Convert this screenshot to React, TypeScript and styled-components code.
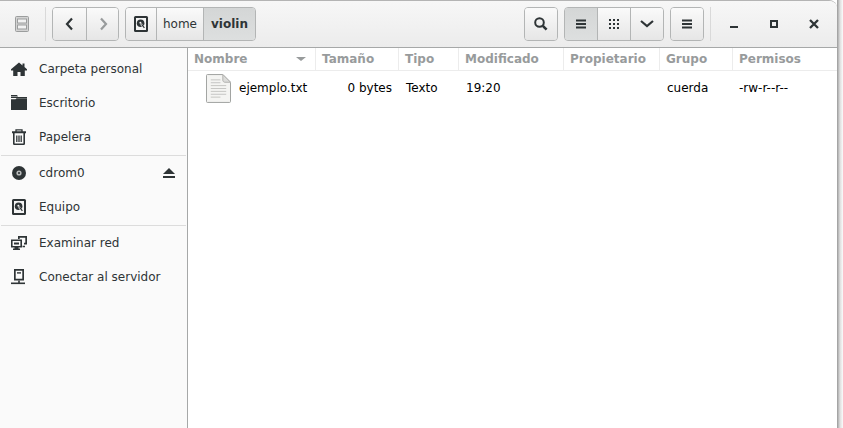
import React from 'react'
import styled, { createGlobalStyle } from 'styled-components'

const GlobalStyle = createGlobalStyle`
  html, body {
    margin: 0;
    padding: 0;
    background: #fff;
    overflow: hidden;
  }
  body {
    font-family: "DejaVu Sans", sans-serif;
    font-size: 12px;
  }
`

const Screen = styled.div`
  display: flex;
  width: 843px;
  height: 428px;
  background: #fff;
`

const Win = styled.div`
  flex: 1;
  min-width: 0;
  display: flex;
  flex-direction: column;
  border-top: 1px solid #b4b4b4;
  border-top-right-radius: 8px;
  overflow: hidden;
  background: #fff;
`

const EdgeShadow = styled.div`
  width: 6px;
  background: linear-gradient(to right, #999, #dedede 50%, #fbfbfb);
`

const Toolbar = styled.div`
  height: 47px;
  flex: none;
  box-sizing: border-box;
  display: flex;
  align-items: center;
  padding: 0 3px 0 15px;
  background: linear-gradient(to bottom, #f7f7f7, #ececec);
  border-bottom: 1px solid #a6a8a8;
`

const AppIcon = styled.div`
  width: 14px;
  height: 16px;
  display: flex;
  margin-right: 16px;
`

const VSep = styled.div<{ $gap: number }>`
  width: 1px;
  height: 34px;
  background: #d9d9d9;
  margin-right: ${({ $gap }) => $gap}px;
`

const BtnGroup = styled.div<{ $gap?: number }>`
  display: flex;
  height: 34px;
  box-sizing: border-box;
  border: 1px solid #b3b5b5;
  border-radius: 4px;
  overflow: hidden;
  margin-right: ${({ $gap }) => $gap ?? 6}px;
`

const Btn = styled.div<{ $w: number; $on?: boolean }>`
  width: ${({ $w }) => $w}px;
  display: flex;
  align-items: center;
  justify-content: center;
  box-sizing: border-box;
  color: #2e3436;
  background: ${({ $on }) => ($on ? 'linear-gradient(to bottom, #d4d6d6, #dddfdf)' : 'linear-gradient(to bottom, #fafafa, #e6e6e6)')};
  font-size: 12px;
  font-weight: ${({ $on }) => ($on ? 700 : 400)};
  & + & {
    border-left: 1px solid #b3b5b5;
  }
`

const Spacer = styled.div`
  flex: 1;
`

const WinControls = styled.div`
  display: flex;
  align-items: center;
  margin-left: 3px;
`

const WinBtn = styled.div`
  width: 40px;
  display: flex;
  justify-content: center;
  color: #2e3436;
`

const Body = styled.div`
  flex: 1;
  min-height: 0;
  display: flex;
`

const Sidebar = styled.div`
  width: 188px;
  flex: none;
  box-sizing: border-box;
  background: #fafafa;
  border-right: 1px solid #a6a8a8;
  padding-top: 4px;
`

const SideRow = styled.div`
  height: 34px;
  display: flex;
  align-items: center;
  padding: 0 11px;
  color: #2e3436;
  font-size: 12px;
`

const SideIcon = styled.div`
  width: 16px;
  height: 16px;
  display: flex;
  margin-right: 12px;
  color: #2e3436;
`

const SideLabel = styled.span`
  flex: 1;
`

const SideSep = styled.div`
  height: 1px;
  background: #dcdcdc;
  margin: 1px 1px 0;
`

const Content = styled.div`
  flex: 1;
  min-width: 0;
`

const COLS = '127px 83px 60px 105px 96px 73px 1fr'

const HeaderRow = styled.div`
  display: grid;
  grid-template-columns: ${COLS};
  height: 23px;
  box-sizing: border-box;
  border-bottom: 1px solid #ececec;
`

const HeadCell = styled.div`
  display: flex;
  align-items: center;
  justify-content: space-between;
  padding: 0 9px 0 6px;
  font-size: 12px;
  font-weight: 700;
  color: #989b9c;
  & + & {
    border-left: 1px solid #ececec;
  }
`

const FileRow = styled.div`
  display: grid;
  grid-template-columns: ${COLS};
  height: 34px;
  align-items: center;
  color: #2e3436;
  font-size: 12px;
`

const NameCell = styled.div`
  display: flex;
  align-items: center;
  padding-left: 18px;
  color: #000;
  gap: 8px;
`

const FileGlyph = styled.svg`
  flex: none;
`

const Cell = styled.div<{ $right?: boolean }>`
  padding: ${({ $right }) => ($right ? '0 6px 0 0' : '0 0 0 8px')};
  text-align: ${({ $right }) => ($right ? 'right' : 'left')};
  color: #000;
  &:last-child {
    padding-left: 7px;
  }
`

const DiskIcon = () => (
  <svg width="16" height="16" viewBox="0 0 16 16">
    <rect x="1" y="0" width="14" height="16" rx="1.5" fill="#2e3436" />
    <rect x="3" y="2" width="10" height="12" fill="#f4f4f4" />
    <circle cx="7.6" cy="7.2" r="3.8" fill="#2e3436" />
    <circle cx="7.4" cy="6.8" r="1" fill="#f4f4f4" />
    <path d="M8 8l3.6 4.4" stroke="#f4f4f4" strokeWidth="2" />
    <path d="M8.6 8.4l2.8 3.4" stroke="#2e3436" strokeWidth="1.2" />
  </svg>
)

const Lines = () => (
  <svg width="12" height="12" viewBox="0 0 12 12" fill="#2e3436">
    <rect x="1" y="1.5" width="10" height="2" />
    <rect x="1" y="5" width="10" height="2" />
    <rect x="1" y="8.5" width="10" height="2" />
  </svg>
)

const Chevron = ({ dir, color = '#2e3436' }: { dir: 'left' | 'right' | 'down'; color?: string }) => {
  const d = dir === 'left' ? 'M10 2.5L5 8l5 5.5' : dir === 'right' ? 'M6 2.5L11 8l-5 5.5' : 'M2 5l6 5 6-5'
  return (
    <svg width="16" height="16" viewBox="0 0 16 16" fill="none">
      <path d={d} stroke={color} strokeWidth="2.2" />
    </svg>
  )
}

const sections = [
  [
    {
      label: 'Carpeta personal',
      icon: (
        <svg width="16" height="16" viewBox="0 0 16 16" fill="#2e3436">
          <path d="M8 1.5L0 8.2v1.4h2.2V15h4.3v-4h3v4h4.3V9.6H16V8.2l-2.5-2.1V2.5h-2v1.9z" />
        </svg>
      ),
    },
    {
      label: 'Escritorio',
      icon: (
        <svg width="16" height="16" viewBox="0 0 16 16" fill="#2e3436">
          <path d="M0 0h6l1 1.5H0z" />
          <path d="M0 2h16v.9H0z" />
          <path d="M0 4.2h4.5l1-1H16V15H0z" />
        </svg>
      ),
    },
    {
      label: 'Papelera',
      icon: (
        <svg width="16" height="16" viewBox="0 0 16 16" fill="none" stroke="#2e3436">
          <path d="M1 3.3h14" strokeWidth="2" />
          <path d="M5 3V.8h6V3" strokeWidth="1.3" />
          <path d="M2.8 4v10.6c0 .5.3.8.8.8h8.8c.5 0 .8-.3.8-.8V4" strokeWidth="1.6" />
          <path d="M5.8 6.5V13M8 6.5V13M10.2 6.5V13" strokeWidth="1.3" />
        </svg>
      ),
    },
  ],
  [
    {
      label: 'cdrom0',
      icon: (
        <svg width="16" height="16" viewBox="0 0 16 16">
          <circle cx="8" cy="8" r="7" fill="#2e3436" />
          <circle cx="8" cy="8" r="2.6" fill="#b9bbbb" />
          <circle cx="8" cy="8" r="1.1" fill="#2e3436" />
        </svg>
      ),
      eject: true,
    },
    { label: 'Equipo', icon: <DiskIcon /> },
  ],
  [
    {
      label: 'Examinar red',
      icon: (
        <svg width="16" height="16" viewBox="0 0 16 16" fill="#2e3436">
          <path d="M7 1h9v8.5h-3V7.8h1.3V2.7H8.7V4H7z" />
          <path fillRule="evenodd" d="M0 4.5h11v8H7.5v1H9V15H2v-1.5h1.5v-1H0zM1.6 6v5h7.8V6z" />
          <rect x="3" y="7.5" width="5" height="2" />
          <path d="M11.5 10.8H14v1.5h-2.5z" />
        </svg>
      ),
    },
    {
      label: 'Conectar al servidor',
      icon: (
        <svg width="16" height="16" viewBox="0 0 16 16" fill="#2e3436">
          <path fillRule="evenodd" d="M3 0h10v11.5H3zM4.7 1.7v8.1h6.6V1.7z" />
          <rect x="6" y="3.2" width="4" height="1.4" />
          <rect x="7.2" y="11.5" width="1.6" height="2.5" />
          <rect x="0" y="13.5" width="14" height="1.6" />
        </svg>
      ),
    },
  ],
]

const columns = ['Nombre', 'Tamaño', 'Tipo', 'Modificado', 'Propietario', 'Grupo', 'Permisos']

export default function App() {
  return (
    <>
      <GlobalStyle />
      <Screen>
        <Win>
          <Toolbar>
            <AppIcon>
              <svg width="14" height="16" viewBox="0 0 14 16" fill="none">
                <rect x=".5" y=".5" width="13" height="15" rx="1" fill="#d3d3d3" stroke="#9b9d9d" />
                <rect x="2.5" y="3" width="9" height="4" fill="#f2f2f2" stroke="#9b9d9d" />
                <rect x="2.5" y="9" width="9" height="4" fill="#f2f2f2" stroke="#9b9d9d" />
              </svg>
            </AppIcon>
            <VSep $gap={6} />
            <BtnGroup>
              <Btn $w={33}><Chevron dir="left" /></Btn>
              <Btn $w={32}><Chevron dir="right" color="#989b9c" /></Btn>
            </BtnGroup>
            <BtnGroup $gap={0}>
              <Btn $w={30}><DiskIcon /></Btn>
              <Btn $w={47}>home</Btn>
              <Btn $w={52} $on>violin</Btn>
            </BtnGroup>
            <Spacer />
            <BtnGroup>
              <Btn $w={32}>
                <svg width="16" height="16" viewBox="0 0 16 16" fill="none" stroke="#2e3436">
                  <circle cx="6.5" cy="6.5" r="4.3" strokeWidth="2" />
                  <path d="M9.8 9.8l3.8 3.8" strokeWidth="2.6" />
                </svg>
              </Btn>
            </BtnGroup>
            <BtnGroup>
              <Btn $w={32} $on><Lines /></Btn>
              <Btn $w={33}>
                <svg width="12" height="12" viewBox="0 0 12 12" fill="#2e3436">
                  {[1, 5, 9].flatMap(y => [1, 5, 9].map(x => <rect key={`${x}-${y}`} x={x} y={y} width="2" height="2" />))}
                </svg>
              </Btn>
              <Btn $w={33}><Chevron dir="down" /></Btn>
            </BtnGroup>
            <BtnGroup>
              <Btn $w={32}><Lines /></Btn>
            </BtnGroup>
            <VSep $gap={0} />
            <WinControls>
              <WinBtn>
                <svg width="16" height="16" viewBox="0 0 16 16" fill="#2e3436">
                  <rect x="4" y="10" width="8" height="2" />
                </svg>
              </WinBtn>
              <WinBtn>
                <svg width="16" height="16" viewBox="0 0 16 16" fill="none" stroke="#2e3436" strokeWidth="2">
                  <rect x="5" y="5" width="6" height="6" />
                </svg>
              </WinBtn>
              <WinBtn>
                <svg width="16" height="16" viewBox="0 0 16 16" fill="none" stroke="#2e3436" strokeWidth="2.3">
                  <path d="M4 4l8 8M12 4l-8 8" />
                </svg>
              </WinBtn>
            </WinControls>
          </Toolbar>
          <Body>
            <Sidebar>
              {sections.map((items, i) => (
                <React.Fragment key={i}>
                  {i > 0 && <SideSep />}
                  {items.map(item => (
                    <SideRow key={item.label}>
                      <SideIcon>{item.icon}</SideIcon>
                      <SideLabel>{item.label}</SideLabel>
                      {'eject' in item && (
                        <svg width="14" height="12" viewBox="0 0 14 12" fill="#2e3436">
                          <path d="M7 1l6 6H1z" />
                          <rect x="1" y="9" width="12" height="2" />
                        </svg>
                      )}
                    </SideRow>
                  ))}
                </React.Fragment>
              ))}
            </Sidebar>
            <Content>
              <HeaderRow>
                {columns.map((c, i) => (
                  <HeadCell key={c}>
                    {c}
                    {i === 0 && (
                      <svg width="10" height="4" viewBox="0 0 10 4" fill="#989b9c">
                        <path d="M0 0h10L5 4z" />
                      </svg>
                    )}
                  </HeadCell>
                ))}
              </HeaderRow>
              <FileRow>
                <NameCell>
                  <FileGlyph width="25" height="29" viewBox="0 0 26 30">
                    <path d="M1.5.5h16l8 8v20a1 1 0 0 1-1 1h-23a1 1 0 0 1-1-1V1.5a1 1 0 0 1 1-1z" fill="#f4f4f2" stroke="#9d9f9d" />
                    <path d="M17.5.5v6c0 1 1 2 2 2h6z" fill="#dcdcda" stroke="#b0b0ae" />
                    <path d="M5 6h10M5 9h10M5 12h16M5 15h16M5 18h16M5 21h16M5 24h10" stroke="#c4c4c2" strokeWidth="1" />
                  </FileGlyph>
                  ejemplo.txt
                </NameCell>
                <Cell $right>0 bytes</Cell>
                <Cell>Texto</Cell>
                <Cell>19:20</Cell>
                <Cell />
                <Cell>cuerda</Cell>
                <Cell>-rw-r--r--</Cell>
              </FileRow>
            </Content>
          </Body>
        </Win>
        <EdgeShadow />
      </Screen>
    </>
  )
}
